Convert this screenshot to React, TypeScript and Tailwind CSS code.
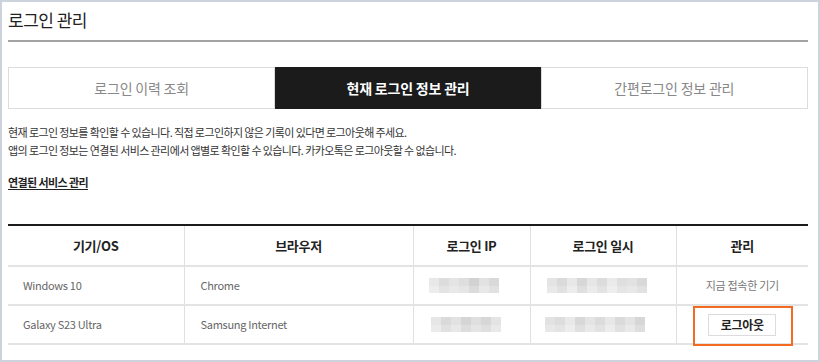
import React from "react";

const font = { fontFamily: '"Noto Sans CJK KR", "Noto Sans", sans-serif' };

const tabs = [
    { label: "로그인 이력 조회", active: false },
    { label: "현재 로그인 정보 관리", active: true },
    { label: "간편로그인 정보 관리", active: false },
];

// pixelated placeholder for masked values (ip / date)
function Masked({ cells, offset }: { cells: string[]; offset: string }) {
    return (
        <div className={`flex h-[15px] w-fit ${offset}`}>
            {cells.map((c, i) => (
                <div key={i} className="flex flex-col">
                    <div className={`h-[8px] w-[10px] ${c}`} />
                    <div className={`h-[7px] w-[10px] ${c} opacity-80`} />
                </div>
            ))}
        </div>
    );
}

const ip1 = ["bg-[#e8e8e8]", "bg-[#dcdcdc]", "bg-[#e4e4e4]", "bg-[#dedede]", "bg-[#d2d2d2]", "bg-[#e2e2e2]", "bg-[#d9d9d9]"];
const ip2 = ["bg-[#e6e6e6]", "bg-[#dadada]", "bg-[#e2e2e2]", "bg-[#d5d5d5]", "bg-[#dfdfdf]", "bg-[#d7d7d7]", "bg-[#e4e4e4]"];
const dt1 = ["bg-[#e4e4e4]", "bg-[#dadada]", "bg-[#e8e8e8]", "bg-[#d7d7d7]", "bg-[#e6e6e6]", "bg-[#dcdcdc]", "bg-[#eaeaea]", "bg-[#dedede]", "bg-[#e2e2e2]", "bg-[#d9d9d9]"];
const dt2 = ["bg-[#e2e2e2]", "bg-[#dddddd]", "bg-[#e9e9e9]", "bg-[#d8d8d8]", "bg-[#e4e4e4]", "bg-[#dbdbdb]", "bg-[#e7e7e7]", "bg-[#dadada]", "bg-[#e3e3e3]", "bg-[#d6d6d6]"];

export default function App() {
    return (
        <div style={font} className="relative h-[362px] w-[820px] overflow-hidden border-2 border-[#cdd3dc] bg-white pl-[6px] pr-[10px] text-[#222]">
            {/* title */}
            <div className="border-b-2 border-[#a3a3a3] pb-[7px] pt-[5px]">
                <h1 className="text-[17px] leading-[26px] font-normal tracking-[-0.5px]">로그인 관리</h1>
            </div>

            {/* tabs */}
            <div className="mt-[25px] flex h-[42px]">
                {tabs.map((t) => (
                    <div
                        key={t.label}
                        className={
                            t.active
                                ? "flex flex-1 items-center justify-center bg-[#1b1b1b] text-[14px] font-bold tracking-[-0.2px] text-white"
                                : "flex flex-1 items-center justify-center border border-[#dcdcdc] text-[14px] tracking-[-0.2px] text-[#888]"
                        }
                    >
                        {t.label}
                    </div>
                ))}
            </div>

            {/* notice */}
            <div className="mt-[14px] text-[11px] leading-[18px] tracking-[-0.6px] text-[#333]">
                <p>현재 로그인 정보를 확인할 수 있습니다. 직접 로그인하지 않은 기록이 있다면 로그아웃해 주세요.</p>
                <p>앱의 로그인 정보는 연결된 서비스 관리에서 앱별로 확인할 수 있습니다. 카카오톡은 로그아웃할 수 없습니다.</p>
            </div>
            <a className="mt-[14px] block w-fit text-[11px] font-bold leading-[18px] tracking-[-0.6px] text-[#222] underline underline-offset-2">
                연결된 서비스 관리
            </a>

            {/* session table */}
            <table className="mt-[33px] w-[800px] table-fixed border-collapse border-t-2 border-[#1b1b1b]">
                <colgroup>
                    <col className="w-[176px]" />
                    <col className="w-[229px]" />
                    <col className="w-[117px]" />
                    <col className="w-[146px]" />
                    <col className="w-[132px]" />
                </colgroup>
                <thead>
                    <tr className="h-[41px] border-b-2 border-[#e3e3e3] text-[13px] font-bold tracking-[-0.3px] text-[#222]">
                        <th className="font-bold">기기/OS</th>
                        <th className="border-l border-[#e0e0e0] font-bold">브라우저</th>
                        <th className="border-l border-[#e0e0e0] font-bold">로그인 IP</th>
                        <th className="border-l border-[#e0e0e0] font-bold">로그인 일시</th>
                        <th className="border-l border-[#e0e0e0] font-bold">관리</th>
                    </tr>
                </thead>
                <tbody className="text-[11px] tracking-[-0.3px] text-[#666]">
                    <tr className="h-[39px] border-b-2 border-[#e3e3e3]">
                        <td className="pl-[15px]">Windows 10</td>
                        <td className="border-l border-[#e0e0e0] pl-[16px]">Chrome</td>
                        <td className="border-l border-[#e0e0e0]"><Masked cells={ip1} offset="ml-[15px]" /></td>
                        <td className="border-l border-[#e0e0e0]"><Masked cells={dt1} offset="ml-[16px]" /></td>
                        <td className="border-l border-[#e0e0e0] text-center text-[#777]">지금 접속한 기기</td>
                    </tr>
                    <tr className="h-[39px] border-b-2 border-[#e3e3e3]">
                        <td className="pl-[15px]">Galaxy S23 Ultra</td>
                        <td className="border-l border-[#e0e0e0] pl-[16px]">Samsung Internet</td>
                        <td className="border-l border-[#e0e0e0]"><Masked cells={ip2} offset="ml-[17px]" /></td>
                        <td className="border-l border-[#e0e0e0]"><Masked cells={dt2} offset="ml-[14px]" /></td>
                        <td className="border-l border-[#e0e0e0] text-center">
                            <button className="h-[22px] w-[68px] border border-[#dcdcdc] bg-white text-[12px] font-bold tracking-[-0.3px] text-[#222]">
                                로그아웃
                            </button>
                        </td>
                    </tr>
                </tbody>
            </table>

            {/* highlight annotation */}
            <div className="absolute left-[691px] top-[304px] h-[40px] w-[100px] border-2 border-[#f26b21]" />
        </div>
    );
}
